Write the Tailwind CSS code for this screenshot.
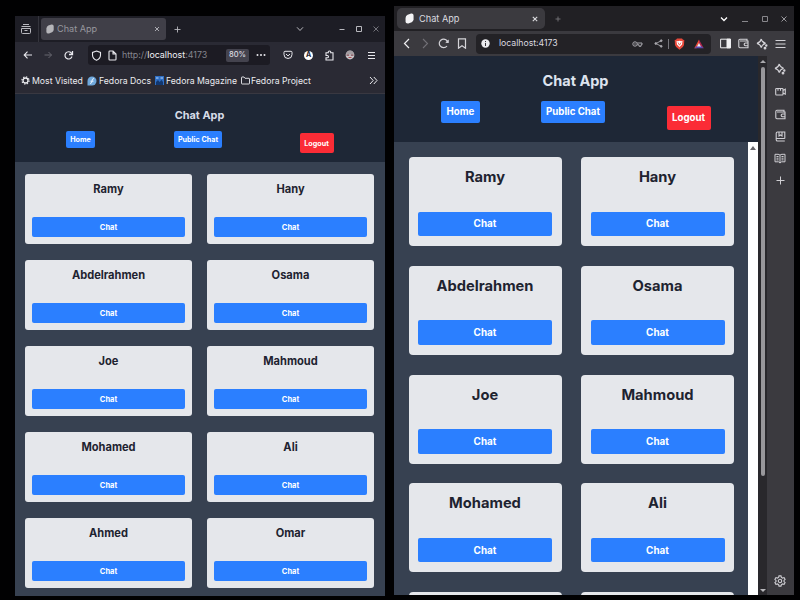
<!DOCTYPE html>
<html lang="en">
<head>
<meta charset="utf-8">
<title>Chat App</title>
<script src="https://cdn.jsdelivr.net/npm/@tailwindcss/browser@4"></script>
</head>
<body class="relative h-[600px] w-[800px] overflow-hidden bg-[#010102] font-[Inter,'Liberation_Sans',sans-serif]">

<!-- Firefox window -->
<section class="absolute left-[15px] top-4 flex h-[580px] w-[370px] flex-col overflow-hidden bg-[#374151]">
  <div class="flex h-[26px] shrink-0 items-center bg-[#1d1d25] text-[#b8b8be]">
    <div class="flex h-full w-6 items-center justify-center border-r border-[#34343c] pr-0.5">
      <svg class="h-3 w-3" viewBox="0 0 12 12" fill="none" stroke="currentColor" stroke-width="1"><path d="M3 1.500h6M1.500 3.500h9M1.500 5.500h9v4a1 1 0 0 1-1 1h-7a1 1 0 0 1-1-1z"/><path d="M4.500 7.500h3"/></svg>
    </div>
    <div class="ml-0.5 flex h-[22px] w-[125px] items-center rounded-[3px] bg-[#403f48] pl-[5px] pr-1.5">
      <svg class="h-[10px] w-2" viewBox="0 0 8 10" fill="#b5b5b9"><path d="M2.300 1.500 5.500.5q2.200-.3 2.200 1.800V6Q7.500 7.500 6 8.300L3 9.500Q.5 9.800.4 8V4.500Q.5 2.300 2.300 1.500z"/></svg>
      <span class="ml-[3px] text-[9.100px] text-[#97979e]">Chat App</span>
      <svg class="ml-auto h-[6px] w-[6px]" viewBox="0 0 6 6" stroke="currentColor" stroke-width=".9"><path d="m1 1 4 4M5 1 1 5"/></svg>
    </div>
    <svg class="ml-[7px] h-[9px] w-[9px]" viewBox="0 0 9 9" stroke="currentColor" stroke-width=".9"><path d="M4.500 1.500v6M1.500 4.500h6"/></svg>
    <svg class="ml-auto h-2 w-2" viewBox="0 0 8 8" fill="none" stroke="currentColor" stroke-width="1"><path d="m1 2.300 3 3.200 3-3.200"/></svg>
    <svg class="ml-[34px] h-2 w-2" viewBox="0 0 8 8" stroke="currentColor" stroke-width="1"><path d="M1.500 4.500h5"/></svg>
    <svg class="ml-[9px] h-2 w-2" viewBox="0 0 8 8" fill="none" stroke="currentColor" stroke-width="1"><path d="M1.500 1.500h5v5h-5z"/></svg>
    <svg class="ml-[9px] mr-[5px] h-2 w-2" viewBox="0 0 8 8" stroke="#73737a" stroke-width="1"><path d="m1.500 1.500 5 5M6.500 1.500l-5 5"/></svg>
  </div>

  <div class="flex h-[26px] shrink-0 items-center bg-[#2a2a34] text-[#e8e8ed]">
    <svg class="ml-2 h-[10px] w-[10px]" viewBox="0 0 10 10" fill="none" stroke="currentColor" stroke-width="1.100"><path d="M9 5H1.200M4.500 1.700 1.200 5l3.300 3.300"/></svg>
    <svg class="ml-[10px] h-[10px] w-[10px] text-[#66666f]" viewBox="0 0 10 10" fill="none" stroke="currentColor" stroke-width="1"><path d="M1.500 5h7M5.500 2l3 3-3 3"/></svg>
    <svg class="ml-[10px] h-[11px] w-[11px]" viewBox="0 0 11 11" fill="none" stroke="currentColor" stroke-width="1.200"><path d="M9 6.500A3.600 3.600 0 1 1 8.300 3L9 3.900"/><path d="M9.500 1v3.500H6" stroke-width="1.300"/></svg>
    <div class="ml-[14px] flex h-5 w-[182px] items-center rounded-[3px] bg-[#1c1b23]">
      <svg class="ml-[3px] h-[11px] w-[11px]" viewBox="0 0 11 11" fill="none" stroke="currentColor" stroke-width="1.100"><path d="M5.500 1 9.500 2.500V5q0 3.500-4 5.300Q1.500 8.500 1.500 5V2.500z"/></svg>
      <svg class="ml-[6px] h-[11px] w-[9px]" viewBox="0 0 9 11" fill="none" stroke="currentColor" stroke-width="1.100"><path d="M1 1.800q0-.8.800-.8H5l3 3v5.200q0 .8-.8.800H1.800Q1 10 1 9.200zM5 1v3h3"/></svg>
      <span class="ml-[5px] w-[86px] whitespace-nowrap text-[8.900px] text-[#85858e]">http://<span class="text-[#f0f0f4]">localhost</span>:4173</span>
      <span class="ml-[18px] flex h-[13px] w-[23px] items-center justify-center rounded-[2px] bg-[#44434e] text-[7.500px] font-medium text-[#dcdce2]">80%</span>
      <svg class="ml-[7px] h-1 w-[10px]" viewBox="0 0 10 4" fill="currentColor"><circle cx="1.500" cy="2" r="1"/><circle cx="5" cy="2" r="1"/><circle cx="8.500" cy="2" r="1"/></svg>
    </div>
    <div class="ml-[7.500px] grid h-full w-[104px] grid-cols-5 items-center justify-items-center">
      <svg class="h-[10px] w-[10px]" viewBox="0 0 10 10" fill="none" stroke="currentColor" stroke-width="1"><path d="M2 1.300h6q1 0 1 1v2.200a4 4 0 0 1-8 0V2.300q0-1 1-1z"/><path d="m3 4 2 1.900L7 4"/></svg>
      <span class="flex h-[9px] w-[9px] items-center justify-center rounded-full bg-white text-[7px] font-bold text-[#24242c]">A</span>
      <svg class="h-[11px] w-[11px]" viewBox="0 0 11 11" fill="none" stroke="currentColor" stroke-width="1.100"><path d="M2 2.800h2.300q-.3-1.800 1.200-1.800t1.200 1.800H9v7.200H2V7.800h1.300q1.200 0 1.200-1.100T3.300 5.500H2z"/></svg>
      <svg class="h-[10px] w-[10px]" viewBox="0 0 10 10"><circle cx="5" cy="5" r="4.400" fill="#c9c5c8"/><path d="M1 4.300Q1.500 1 5 .8T9 4.300z" fill="#a39da1"/><path d="M1.500 5.200h2.700M5.800 5.200h2.700" stroke="#7d4a52" stroke-width="1.200"/><path d="M3.500 7.500h3" stroke="#b04b52"/></svg>
      <svg class="h-[9px] w-[9px]" viewBox="0 0 9 9" stroke="currentColor" stroke-width="1"><path d="M1 1.500h7M1 4.500h7M1 7.500h7"/></svg>
    </div>
  </div>

  <div class="flex h-[26px] shrink-0 items-center border-b border-[#393841] bg-[#2a2a34] pl-[6px] text-[8.700px] leading-[12px] whitespace-nowrap text-[#ececf0]">
    <svg class="h-[9px] w-[9px] shrink-0" viewBox="0 0 9 9" fill="none" stroke="currentColor"><circle cx="4.500" cy="4.500" r="2.500" stroke-width="1.300"/><circle cx="4.500" cy="4.500" r="3.600" stroke-width="1.200" stroke-dasharray="1.410 1.410"/></svg>
    <span class="ml-[2px] w-[49px] pt-px">Most Visited</span>
    <svg class="ml-[6px] h-[10px] w-[10px] shrink-0" viewBox="0 0 10 10"><path d="M.5 5a4.500 4.500 0 1 1 4.500 4.500H.5z" fill="#6fa8dc"/><path d="M3 7.500q2 0 2-2.500t2-2.500M3.500 5.200h3" fill="none" stroke="#e9f3ff" stroke-width="1"/></svg>
    <span class="ml-[2px] w-[50px] pt-px">Fedora Docs</span>
    <svg class="ml-[6px] h-[9px] w-[9px] shrink-0" viewBox="0 0 9 9"><path fill="#2f6fc4" d="M0 0h9v9H0z"/><path fill="#12376f" d="M1 9V6l2-2 1.500 2L6.500 4 8 6v3z"/><path d="M1 2h2.500M5.500 2H8" stroke="#b9d9ff"/></svg>
    <span class="ml-[2px] w-[68px] pt-px">Fedora Magazine</span>
    <svg class="ml-[7px] h-[9px] w-[9px] shrink-0" viewBox="0 0 9 9" fill="none" stroke="currentColor" stroke-width=".9"><path d="M.5 7.500v-6q0-.5.500-.5h2l1 1.300h4q.5 0 .5.500v4.700q0 .5-.5.500H1q-.5 0-.5-.5z"/></svg>
    <span class="ml-[1px] pt-px">Fedora Project</span>
    <svg class="ml-auto mr-[7px] h-[9px] w-[9px] shrink-0" viewBox="0 0 9 9" fill="none" stroke="currentColor" stroke-width="1"><path d="m1 1 3.200 3.500L1 8M4.800 1 8 4.500 4.800 8"/></svg>
  </div>

  <header class="h-[68px] shrink-0 bg-[#1e2736]">
    <h1 class="pr-px pt-[13px] text-center text-[10.900px] leading-4 font-bold text-[#d7dde8]">Chat App</h1>
    <nav class="flex pl-[51px] pt-[8px] text-[7.200px] leading-[10px] font-bold text-white">
      <a class="flex h-[17px] w-[29px] items-center justify-center rounded-[2px] bg-[#2b7fff] pt-px">Home</a>
      <a class="ml-[79px] flex h-[17px] w-[48px] items-center justify-center rounded-[2px] bg-[#2b7fff] pt-px">Public Chat</a>
      <a class="ml-[78px] mt-[2px] flex h-5 w-[34px] items-center justify-center rounded-[2px] bg-[#fb2c36] pr-px pt-px">Logout</a>
    </nav>
  </header>
  <main id="small" class="grid grid-cols-[167px_167px] gap-x-[15px] gap-y-4 pl-[10px] pt-3"></main>
</section>

<!-- Brave window -->
<section class="absolute left-[394px] top-[6px] flex h-[589px] w-[400px] flex-col overflow-hidden bg-[#3b3a3f]">
  <div class="flex h-[25px] shrink-0 items-center bg-[#212024] text-[#dcdce0]">
    <div class="ml-[3px] flex h-[21px] w-[148px] items-center rounded-[5px] bg-[#3b3a3f] pl-2 pr-[7px]">
      <svg class="h-[11px] w-[9px]" viewBox="0 0 8 10" fill="#f4f4f6"><path d="M2.300 1.500 5.500.5q2.200-.3 2.200 1.800V6Q7.500 7.500 6 8.300L3 9.500Q.5 9.800.4 8V4.500Q.5 2.300 2.300 1.500z"/></svg>
      <span class="ml-[5px] text-[9.200px]">Chat App</span>
      <svg class="ml-auto h-[6px] w-[6px]" viewBox="0 0 6 6" stroke="currentColor" stroke-width="1.100"><path d="m.8.8 4.400 4.400M5.200.8.800 5.200"/></svg>
    </div>
    <svg class="ml-[9px] h-2 w-2" viewBox="0 0 8 8" stroke="#77767c" stroke-width=".9"><path d="M4 1.500v5M1.500 4h5"/></svg>
    <svg class="ml-auto h-2 w-2" viewBox="0 0 8 8" fill="none" stroke="#fff" stroke-width="1.300"><path d="m1 2.500 3 3 3-3"/></svg>
    <svg class="ml-[13px] h-2 w-2" viewBox="0 0 8 8" stroke="#88878c"><path d="M1 6.500h6"/></svg>
    <svg class="ml-[12px] h-2 w-2" viewBox="0 0 8 8" fill="none" stroke="#88878c"><path d="M1.500 1.500h5v5h-5z"/></svg>
    <svg class="ml-[11px] mr-[6px] h-2 w-2" viewBox="0 0 8 8" stroke="#98979c"><path d="m1.500 1.500 5 5M6.500 1.500l-5 5"/></svg>
  </div>

  <div class="flex h-[25px] shrink-0 items-center bg-[#3b3a3f] text-[#d4d3d8]">
    <svg class="ml-2 h-[11px] w-[10px]" viewBox="0 0 10 11" fill="none" stroke="#f0f0f2" stroke-width="1.200"><path d="m7 1-4.500 4.500L7 10"/></svg>
    <svg class="ml-2 h-[11px] w-[10px]" viewBox="0 0 10 11" fill="none" stroke="#727177" stroke-width="1.100"><path d="m3 1 4.500 4.500L3 10"/></svg>
    <svg class="ml-2 h-[11px] w-[11px]" viewBox="0 0 11 11" fill="none" stroke="currentColor" stroke-width="1.200"><path d="M9 8a4.300 4.300 0 1 1 .9-3"/><path d="M7.800 4.500h2.600V2z" fill="currentColor" stroke-width=".7"/></svg>
    <svg class="ml-2 h-[11px] w-[10px]" viewBox="0 0 10 11" fill="none" stroke="currentColor" stroke-width="1.200"><path d="M1.500.8h7v9.400L5 7.800l-3.500 2.400z"/></svg>
    <div class="ml-[9px] flex h-5 w-[235px] items-center rounded-[4px] bg-[#232226]">
      <svg class="ml-[5px] h-[9px] w-[9px]" viewBox="0 0 9 9"><circle cx="4.500" cy="4.500" r="4.200" fill="#ececf0"/><path d="M4.500 4v3M4.500 2v1.100" stroke="#333238" stroke-width="1"/></svg>
      <span class="ml-[9px] text-[8.700px] text-[#dcdbe0]">localhost:4173</span>
      <svg class="ml-auto h-2 w-[11px]" viewBox="0 0 11 8" fill="none" stroke="#a9a8ae" stroke-width="1"><circle cx="3" cy="4" r="2.200"/><circle cx="3" cy="4" r=".3"/><path d="M5.100 3H10v1.800H9V6.300H7V4.800H5.100"/></svg>
      <svg class="ml-[11px] h-[9px] w-[9px]" viewBox="0 0 9 9" fill="#a9a8ae" stroke="#a9a8ae" stroke-width=".9"><path d="M7 1.800 2 4.500l5 2.700" fill="none"/><circle cx="7.200" cy="1.700" r=".9"/><circle cx="1.800" cy="4.500" r=".9"/><circle cx="7.200" cy="7.300" r=".9"/></svg>
      <span class="ml-[5px] h-[10px] w-px bg-[#77767c]"></span>
      <svg class="ml-[5px] h-3 w-[11px]" viewBox="0 0 11 12"><path d="M3 .5h5l1 1.200 1.300.3-.3 5q-.5 2.500-4.500 4.700Q1.500 9.500 1 7L.7 2 2 1.700z" fill="#e8493b"/><path d="m2.500 3 1.500.2 1.500-.4L7 3.200 8.500 3 8 6.500 5.500 9 3 6.500z" fill="#fff"/><path d="m4 4.500 1.500 2.700L7 4.500" fill="none" stroke="#e8493b" stroke-width=".8"/></svg>
      <svg class="ml-[9px] mr-[7px] h-[10px] w-[10px]" viewBox="0 0 10 10"><path d="M5 .5v4L2.700 9.200H.3z" fill="#ee4b38"/><path d="M5 .5 9.700 9.200 7.300 8 5 4.500z" fill="#b5264f"/><path d="M.3 9.200 3 7h4.300l2.400 2.200z" fill="#5b4bb0"/><path d="M5 4 7 7.500H3z" fill="#f3f0f5"/></svg>
    </div>
    <div class="ml-[5px] grid h-full w-[74px] grid-cols-4 items-center justify-items-center">
      <svg class="h-[11px] w-[11px]" viewBox="0 0 11 11" fill="none" stroke="#f0f0f2" stroke-width="1"><path d="M.6 1.200h9.800v8.600H.6z"/><path d="M7 1.200h3.400v8.600H7z" fill="#f0f0f2"/></svg>
      <svg class="h-[11px] w-[11px]" viewBox="0 0 11 11" fill="none" stroke="currentColor" stroke-width="1.100"><path d="M9 3V1.200H2A1.300 1.300 0 0 0 .8 2.500v6A1.300 1.300 0 0 0 2 9.800h8V3H2M10 5H7.500a1.300 1.300 0 0 0 0 2.700H10"/></svg>
      <svg class="h-3 w-3" viewBox="0 0 12 12" fill="none" stroke="currentColor" stroke-width="1.200"><path d="M5.300 1q.7 3.400 4.300 4.300-3.500.8-4.300 4.300Q4.400 6.100 1 5.300 4.500 4.400 5.300 1z"/><circle cx="10.300" cy="7.500" r=".6" fill="currentColor"/><circle cx="9" cy="10.200" r=".8" fill="currentColor"/></svg>
      <svg class="h-[10px] w-[11px]" viewBox="0 0 11 10" stroke="currentColor" stroke-width="1.100"><path d="M.5 1.500h10M.5 5h10M.5 8.500h10"/></svg>
    </div>
  </div>

  <div class="flex min-h-0 flex-1">
    <div class="flex w-[364px] flex-col overflow-hidden bg-[#374151]">
      <header class="h-[86px] shrink-0 bg-[#1e2736]">
        <h1 class="pr-px pt-4 text-center text-[14.500px] leading-[18px] font-bold text-[#dde3ee]">Chat App</h1>
        <nav class="flex pl-[47px] pt-[11px] text-[9.700px] font-bold text-white">
          <a class="flex h-[22px] w-[39px] items-center justify-center rounded-[2px] bg-[#2b7fff]">Home</a>
          <a class="ml-[61px] flex h-[22px] w-[64px] items-center justify-center rounded-[2px] bg-[#2b7fff]">Public Chat</a>
          <a class="ml-[62px] mt-[5px] flex h-[24px] w-[44px] items-center justify-center rounded-[2px] bg-[#fb2c36] pr-px">Logout</a>
        </nav>
      </header>
      <div class="flex min-h-0 flex-1">
        <main id="large" class="grid w-[354px] grid-cols-[153px_153px] content-start gap-x-[19.500px] gap-y-[19.800px] overflow-hidden pl-[14.500px] pt-[15px]"></main>
        <div class="w-[10px] bg-white pl-[2px] pt-1"><svg class="h-1 w-[6px]" viewBox="0 0 6 4" fill="#66656a"><path d="M3 0 6 4H0z"/></svg></div>
      </div>
    </div>
    <div class="flex w-[9px] flex-col items-center bg-[#29282c] pb-[3px] pt-1">
      <svg class="h-[3px] w-[6px] shrink-0" viewBox="0 0 6 3" fill="#aaa9ad"><path d="M3 0 6 3H0z"/></svg>
      <span class="mt-1 h-[409px] w-1 shrink-0 rounded-full bg-[#98979b]"></span>
      <svg class="mt-auto h-[3px] w-[6px] shrink-0" viewBox="0 0 6 3" fill="#b8b7bb"><path d="M3 3 6 0H0z"/></svg>
    </div>
    <aside class="flex flex-1 flex-col items-center bg-[#3b3a3f] pr-px pt-[7px] text-[#cfced3]">
      <svg class="h-3 w-3" viewBox="0 0 12 12" fill="none" stroke="currentColor" stroke-width="1.200"><path d="M5.300 1q.7 3.400 4.300 4.300-3.500.8-4.300 4.300Q4.400 6.100 1 5.300 4.500 4.400 5.300 1z"/><circle cx="10.300" cy="7.500" r=".6" fill="currentColor"/><circle cx="9" cy="10.200" r=".8" fill="currentColor"/></svg>
      <svg class="mt-[11px] h-[11px] w-[11px]" viewBox="0 0 11 11" fill="none" stroke="currentColor" stroke-width="1.100"><path d="M1.500 2.500h5.800q.7 0 .7.700v5q0 .8-.7.800H1.500q-.8 0-.8-.8v-5q0-.7.800-.7zM8 4.500l2.300-1.300v5L8 7M3 2.500v2.300M5.500 2.500v2.300"/></svg>
      <svg class="mt-3 h-[11px] w-[11px]" viewBox="0 0 11 11" fill="none" stroke="currentColor" stroke-width="1.100"><path d="M9 3V1.200H2A1.300 1.300 0 0 0 .8 2.500v6A1.300 1.300 0 0 0 2 9.800h8V3H2M10 5H7.500a1.300 1.300 0 0 0 0 2.700H10"/></svg>
      <svg class="mt-[11px] h-[11px] w-[11px]" viewBox="0 0 11 11" fill="none" stroke="currentColor" stroke-width="1.100"><path d="M9.800 7.500V1H2.500Q1.200 1 1.200 2.300v6.400Q1.200 10 2.500 10h7.300M1.200 7.500h8.600M4 1v4l1.500-1L7 5V1"/></svg>
      <svg class="mt-[11px] h-[11px] w-[12px]" viewBox="0 0 12 11" fill="none" stroke="currentColor" stroke-width="1"><path d="M6 2.200Q5.500 1.300 4 1.300H1v7.500h3.500L6 10l1.500-1.200H11V1.300H8q-1.500 0-2 .9zM6 2v8M2.500 3.500h2M2.500 5.200h2M2.500 6.900h2M7.500 3.500h2M7.500 5.200h2M7.500 6.900h2"/></svg>
      <svg class="mt-[12px] h-[9px] w-[9px]" viewBox="0 0 9 9" stroke="currentColor" stroke-width="1"><path d="M4.500.5v8M.5 4.500h8"/></svg>
      <svg class="mt-auto mb-2 h-3 w-3" viewBox="0 0 12 12" fill="none" stroke="currentColor" stroke-width="1.100"><circle cx="6" cy="6" r="1.700"/><path d="M5 .9h2l.4 1.500 1.200.7 1.500-.5 1 1.700L10 5.400v1.200l1.100 1.100-1 1.700-1.500-.5-1.200.7L7 11.100H5l-.4-1.500-1.200-.7-1.500.5-1-1.700L2 6.600V5.400L.9 4.300l1-1.700 1.500.5 1.200-.7z"/></svg>
    </aside>
  </div>
</section>

<script>
const users = ["Ramy", "Hany", "Abdelrahmen", "Osama", "Joe", "Mahmoud", "Mohamed", "Ali", "Ahmed", "Omar"];
document.getElementById("small").innerHTML = users.map(name => `
  <article class="flex h-[70px] flex-col rounded-[3px] bg-[#e5e7eb] px-[7px] pb-[7px] pt-2 text-center">
    <h2 class="text-[11.100px] leading-[15px] font-bold text-[#1e2330]">${name}</h2>
    <button class="mt-auto h-5 rounded-[2px] bg-[#2b7fff] pt-px text-[7.500px] leading-[10px] font-bold text-white">Chat</button>
  </article>`).join("");
// The last row peeks in only by its top edge, so its cards stay empty.
const peek = `<article class="h-[89px] rounded-[4px] bg-[#e5e7eb]"></article>`;
document.getElementById("large").innerHTML = users.slice(0, 8).map(name => `
  <article class="flex h-[89px] flex-col rounded-[4px] bg-[#e5e7eb] px-[9.500px] pb-[10px] pt-[11px] text-center">
    <h2 class="text-[14.700px] leading-[19px] font-bold text-[#1e2330]">${name}</h2>
    <button class="mt-auto h-[24.500px] rounded-[2px] bg-[#2b7fff] text-[9.900px] font-bold text-white">Chat</button>
  </article>`).join("") + peek + peek;
</script>
</body>
</html>
